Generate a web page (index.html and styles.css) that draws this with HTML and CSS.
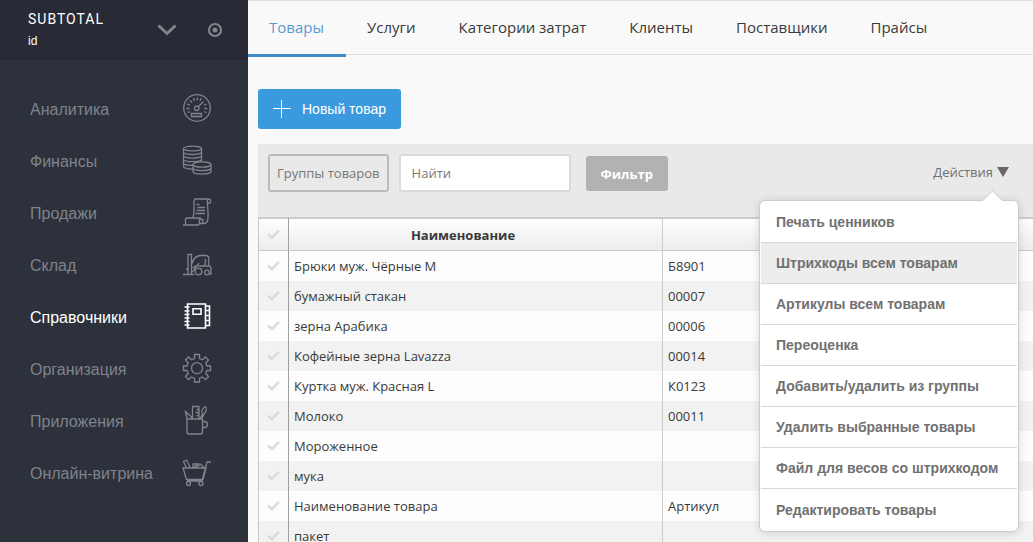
FILE: index.html
```html
<!DOCTYPE html>
<html lang="ru">
<head>
<meta charset="utf-8">
<title>Subtotal — Товары</title>
<link rel="stylesheet" href="styles.css">
</head>
<body>
<div class="app">
  <aside class="sidebar">
    <header class="brand">
      <div class="brand-text">
        <span class="brand-name">SUBTOTAL</span>
        <span class="brand-id">id</span>
      </div>
      <button class="icon-button" aria-label="Сменить магазин">
        <svg width="20" height="12" viewBox="0 0 20 12"><path d="M1.5 1.5 10 9.5 18.5 1.5" stroke-width="3"/></svg>
      </button>
      <button class="icon-button" aria-label="Настройки">
        <svg width="16" height="16" viewBox="0 0 16 16"><circle cx="8" cy="8" r="6" stroke-width="2.2"/><circle class="dot" cx="8" cy="8" r="2.5"/></svg>
      </button>
    </header>
    <nav class="side-nav">
      <a class="side-link" href="#"><span>Аналитика</span>
        <svg width="30" height="30" viewBox="0 0 30 30"><circle cx="15" cy="15" r="13.3"/><circle cx="14.7" cy="15.3" r="2.2"/><path d="M16.3 13.7 21.5 8.5M9.5 20.5h10v3h-10zM4.5 15.500h3M22.3 15.500h3M5.2 11l2.700 1.100M24.600 11l-2.600 1.100M8 7.500l2 2M11.500 5.200l1 2.600M15.300 4.400v2.800M19 5.200l-1 2.600M5.500 19.500l2.500-.8M24.500 19.500l-2.500-.8"/></svg></a>
      <a class="side-link" href="#"><span>Финансы</span>
        <svg width="30" height="30" viewBox="0 0 30 30"><ellipse cx="10.500" cy="3.500" rx="9" ry="2.300"/><path d="M1.500 3.500v18c0 1.700 4 2.700 9.500 2.600M19.500 3.500v13M1.500 7c0 3.300 18 3.300 18 0M1.500 10.600c0 3.300 18 3.300 18 0M1.500 14.200c0 3.300 18 3.300 18 0M1.500 17.900c0 2 5 2.700 9.300 2.500"/><ellipse cx="20" cy="19.500" rx="9" ry="2.700"/><path d="M11 19.500v7c0 3.500 18 3.500 18 0v-7M11 23c0 3.500 18 3.500 18 0"/></svg></a>
      <a class="side-link" href="#"><span>Продажи</span>
        <svg width="30" height="30" viewBox="0 0 30 30"><path d="M11 21c1.500-6 1-11 1-15.500 0-2 .3-3.500 1.500-3.500H27c2 0 2.300 4 .8 4H25.500M27 2c-2 0-1.500 2.500-1.500 4 0 7 1.500 13 0 17.500-.5 2-1.300 3-3.500 3h-3M3.500 28v-5.500c0-1.200.5-1.500 1.500-1.500h13c-1.500 1.500-1 5.500.8 5.500 2 0 2.200-2.500 2.200-4H18M1 28h15c1.500 0 1.500-1.500 1.500-3M14.500 7.500h3M15.500 10.500H23M14.500 13.500H23M13.500 16.500h9.500"/></svg></a>
      <a class="side-link" href="#"><span>Склад</span>
        <svg width="30" height="30" viewBox="0 0 30 30"><path d="M6 25V5.500h3.500V25M1 25.500h11M4 20h2M10 23c3-1.500 2.500-5 5-6l2-3M10 14.500C11.500 9 15 6.500 19 6.500h4.500c2 0 3.300 1 3.300 3v7.500M13 18.500c1-3 4-1.500 6.500-1.500h7.300c1.700 0 2.200 1.500 2.200 3V25h-1.500M10.500 19l4-2.500M22.500 17l1-4.500V10"/><circle cx="16.500" cy="22.500" r="3.300"/><circle cx="25" cy="23.500" r="2.300"/></svg></a>
      <a class="side-link active" href="#"><span>Справочники</span>
        <svg width="30" height="30" viewBox="0 0 30 30"><path d="M5.500 3h18v24h-18zM11 7.800h8v5.500h-8zM2.500 6h5M2.500 10h5M2.500 13.500h5M2.500 17h5M2.500 20.500h5M2.500 24h5M23.500 5h4v19.500h-4M23.500 9.500h4M23.500 14.500h4M23.500 19.500h4"/></svg></a>
      <a class="side-link" href="#"><span>Организация</span>
        <svg width="30" height="30" viewBox="0 0 30 30"><path d="M12.500 1.500h5v4l3 1.300 3-2.800 3 3-2.700 3 1.200 3h3.500v4.500H25l-1.200 3 2.700 3-3 3.200-3-2.700-3 1.200v3.800h-5v-3.800l-3-1.200-3 2.700-3-3.200 2.700-3-1.200-3H1.500V13H5l1.200-3-2.700-3 3-3 3 2.800 3-1.300z"/><circle cx="15" cy="15.200" r="5.500"/></svg></a>
      <a class="side-link" href="#"><span>Приложения</span>
        <svg width="30" height="30" viewBox="0 0 30 30"><path d="M5 14h15.500v13c0 1.500-.8 2-2 2H7c-1.300 0-2-.7-2-2zM20.500 16.500h2c4 0 4 6 0 6h-2M10.500 14V1.500H17V14M14.500 4.500H17M13.500 7.500H17M14.500 10.500H17M5 14 3.500 6.500 9.500 12v2M3.500 9.500 6 8.500M18 14l2.500-5c-1.500-2.500 0-6 3-7.500 1.500 3 0 6-1.500 7.500l-2.500 5"/></svg></a>
      <a class="side-link" href="#"><span>Онлайн-витрина</span>
        <svg width="30" height="30" viewBox="0 0 30 30"><path d="M1 11h23l-3 11.500H4.500zM29 5h-4l-5 19H5M4.500 11 1.500 4.500 4.500 3l4 8M11 11V7h5l-5 4M13.500 11l5-4 4 4"/><circle cx="6.500" cy="26.500" r="2"/><circle cx="19" cy="26.500" r="2"/></svg></a>
    </nav>
  </aside>

  <main class="main">
    <nav class="tabs">
      <a class="tab current" href="#">Товары</a>
      <a class="tab" href="#">Услуги</a>
      <a class="tab" href="#">Категории затрат</a>
      <a class="tab" href="#">Клиенты</a>
      <a class="tab" href="#">Поставщики</a>
      <a class="tab" href="#">Прайсы</a>
    </nav>
    <div class="content">
      <button class="new-item">
        <svg width="18" height="18" viewBox="0 0 18 18"><path d="M8.500 0v18M0 8.500h18"/></svg>
        <span>Новый товар</span>
      </button>
      <section class="panel">
        <div class="toolbar">
          <button class="groups">Группы товаров</button>
          <input class="search" type="text" placeholder="Найти" aria-label="Найти">
          <button class="filter">Фильтр</button>
          <div class="actions">
            <button class="actions-toggle" aria-expanded="true">Действия
              <svg width="12" height="10" viewBox="0 0 12 10"><path d="M0 0h12L6 10z"/></svg>
            </button>
            <div class="menu">
              <button class="menu-item">Печать ценников</button>
              <button class="menu-item hovered">Штрихкоды всем товарам</button>
              <button class="menu-item">Артикулы всем товарам</button>
              <button class="menu-item">Переоценка</button>
              <button class="menu-item">Добавить/удалить из группы</button>
              <button class="menu-item">Удалить выбранные товары</button>
              <button class="menu-item">Файл для весов со штрихкодом</button>
              <button class="menu-item">Редактировать товары</button>
            </div>
          </div>
        </div>
        <table class="goods">
          <thead>
            <tr><th class="col-check"><input class="tick" type="checkbox" aria-label="Выбрать все"></th><th class="col-name">Наименование</th><th></th></tr>
          </thead>
          <tbody>
            <tr><td><input class="tick" type="checkbox" aria-label="Выбрать Брюки муж. Чёрные M"></td><td>Брюки муж. Чёрные M</td><td>Б8901</td></tr>
            <tr><td><input class="tick" type="checkbox" aria-label="Выбрать бумажный стакан"></td><td>бумажный стакан</td><td>00007</td></tr>
            <tr><td><input class="tick" type="checkbox" aria-label="Выбрать зерна Арабика"></td><td>зерна Арабика</td><td>00006</td></tr>
            <tr><td><input class="tick" type="checkbox" aria-label="Выбрать Кофейные зерна Lavazza"></td><td>Кофейные зерна Lavazza</td><td>00014</td></tr>
            <tr><td><input class="tick" type="checkbox" aria-label="Выбрать Куртка муж. Красная L"></td><td>Куртка муж. Красная L</td><td>К0123</td></tr>
            <tr><td><input class="tick" type="checkbox" aria-label="Выбрать Молоко"></td><td>Молоко</td><td>00011</td></tr>
            <tr><td><input class="tick" type="checkbox" aria-label="Выбрать Мороженное"></td><td>Мороженное</td><td></td></tr>
            <tr><td><input class="tick" type="checkbox" aria-label="Выбрать мука"></td><td>мука</td><td></td></tr>
            <tr><td><input class="tick" type="checkbox" aria-label="Выбрать Наименование товара"></td><td>Наименование товара</td><td>Артикул</td></tr>
            <tr><td><input class="tick" type="checkbox" aria-label="Выбрать пакет"></td><td>пакет</td><td></td></tr>
          </tbody>
        </table>
      </section>
    </div>
  </main>
</div>
</body>
</html>
```
FILE: styles.css
```css
* { box-sizing: border-box; }

body {
  margin: 0;
  background: #f9f9f9;
  color: #3a3a3a;
  font-family: "Open Sans", "Noto Sans", sans-serif;
  font-size: 13px;
}

button, input { font: inherit; margin: 0; }
button { cursor: pointer; }
a { color: inherit; text-decoration: none; }

.app {
  display: flex;
  height: 100vh;
  overflow: hidden;
}

/* Sidebar */
.sidebar {
  flex: 0 0 248px;
  background: #2d313c;
  color: #7f838b;
  font-family: "Liberation Sans", Arial, sans-serif;
}

.sidebar svg {
  display: block;
  fill: none;
  stroke: #80848c;
  stroke-width: 1.3;
}

.brand {
  display: flex;
  align-items: center;
  height: 60px;
  padding: 0 25px 0 28px;
  background: #282b35;
  border-bottom: 1px solid #262932;
}

.brand-text {
  flex: 1;
  display: flex;
  flex-direction: column;
  gap: 6px;
  color: #fff;
}

.brand-name {
  font-family: Roboto, sans-serif;
  font-size: 14px;
  line-height: 16px;
  letter-spacing: 1px;
}

.brand-id {
  font-size: 12px;
  line-height: 16px;
}

.icon-button {
  padding: 0;
  border: 0;
  background: none;
}

.icon-button + .icon-button { margin-left: 30px; }
.sidebar .dot { fill: #80848c; stroke: none; }

.side-nav { padding-top: 24px; }

.side-link {
  display: flex;
  align-items: center;
  justify-content: space-between;
  height: 52px;
  padding: 0 36px 0 30px;
  font-size: 16px;
}

.side-link svg { margin-bottom: 5px; }
.side-link.active { color: #fff; }

.side-link.active svg {
  stroke: #fff;
  stroke-width: 1.6;
}

/* Tabs */
.main {
  flex: 1;
  min-width: 0;
  border-top: 1px solid #dedede;
}

.tabs {
  display: flex;
  height: 54px;
  border-bottom: 1px solid #dedede;
  font-size: 15px;
}

.tab {
  height: 56px;
  padding: 0 22px 0 21px;
  line-height: 53px;
  white-space: nowrap;
}

.tab.current {
  color: #5a9ad1;
  border-bottom: 3px solid #3f8cc9;
}

/* Content */
.content { padding: 34px 0 0 10px; }

.new-item {
  display: flex;
  align-items: center;
  gap: 11px;
  height: 40px;
  padding: 0 15px;
  border: 0;
  border-radius: 3px;
  background: #3b9ade;
  color: #fff;
  font-family: "Liberation Sans", Arial, sans-serif;
  font-size: 14px;
}

.new-item svg {
  stroke: #fff;
  stroke-width: 1;
}

.panel {
  margin-top: 15px;
  background: #e9e9e9;
}

.toolbar {
  display: flex;
  align-items: flex-start;
  height: 73px;
  padding: 10px 24px 0 10px;
}

.groups {
  height: 38px;
  padding: 0 7px;
  border: 2px solid #bbb;
  border-radius: 3px;
  background: none;
  color: #777;
}

.search {
  width: 172px;
  height: 38px;
  margin-left: 10px;
  padding: 0 11px;
  border: 2px solid #dadada;
  border-radius: 3px;
  background: #fff;
}

.search::placeholder { color: #777; opacity: 1; }

.filter {
  height: 35px;
  margin: 2px 0 0 15px;
  padding: 0 15px;
  border: 0;
  border-radius: 3px;
  background: #b2b2b2;
  color: #fff;
  font-weight: bold;
}

.actions {
  position: relative;
  margin-left: auto;
}

.actions-toggle {
  display: flex;
  align-items: center;
  gap: 4px;
  height: 36px;
  padding: 0;
  border: 0;
  background: none;
  color: #707070;
}

.actions-toggle svg { fill: #666; }

.menu {
  position: absolute;
  z-index: 1;
  top: 46px;
  right: -10px;
  width: 260px;
  padding: 1px;
  border: 1px solid #ccc;
  border-radius: 6px;
  background: #fff;
  box-shadow: 0 1px 8px rgba(0, 0, 0, 0.15);
}

.menu::before {
  content: "";
  position: absolute;
  top: -8px;
  right: 18px;
  width: 14px;
  height: 14px;
  border: 1px solid #ccc;
  border-right: 0;
  border-bottom: 0;
  background: #fff;
  transform: rotate(45deg);
}

.menu-item {
  position: relative;
  display: block;
  width: 100%;
  height: 41px;
  padding: 0 15px;
  border: 0;
  border-bottom: 1px solid #d8d8d8;
  background: none;
  color: #717171;
  font-family: "Liberation Sans", Arial, sans-serif;
  font-size: 14px;
  font-weight: bold;
  text-align: left;
  white-space: nowrap;
}

.menu-item:last-child { border-bottom: 0; }
.menu-item.hovered { background: #ededed; }

/* Goods table */
.goods {
  width: 100%;
  table-layout: fixed;
  border-collapse: separate;
  border-spacing: 0;
  border-left: 1px solid #c8c8c8;
  background: #fdfdfd;
}

.goods th, .goods td {
  height: 30px;
  padding: 0 5px;
  border-right: 1px solid #ccc;
  text-align: left;
  white-space: nowrap;
}

.goods th {
  height: 34px;
  padding-right: 30px;
  border-top: 2px solid #ccc;
  border-bottom: 1px solid #ccc;
  background: linear-gradient(#fefefe, #ececec);
  text-align: center;
}

.goods th:first-child, .goods td:first-child {
  padding: 0;
  border-right-color: #a0a0a0;
}

.goods .col-check { width: 30px; }
.goods .col-name { width: 374px; }
.goods th:last-child, .goods td:last-child { border-right: 0; }
.goods tbody tr:nth-child(even) { background: #f2f2f2; }

.tick {
  display: block;
  width: 13px;
  height: 10px;
  margin: 0 auto;
  appearance: none;
  background: #dcdcdc;
  clip-path: polygon(0 55%, 15% 38%, 37% 62%, 85% 0, 100% 15%, 38% 100%);
}

.tick:checked { background: #3b9ade; }
```
